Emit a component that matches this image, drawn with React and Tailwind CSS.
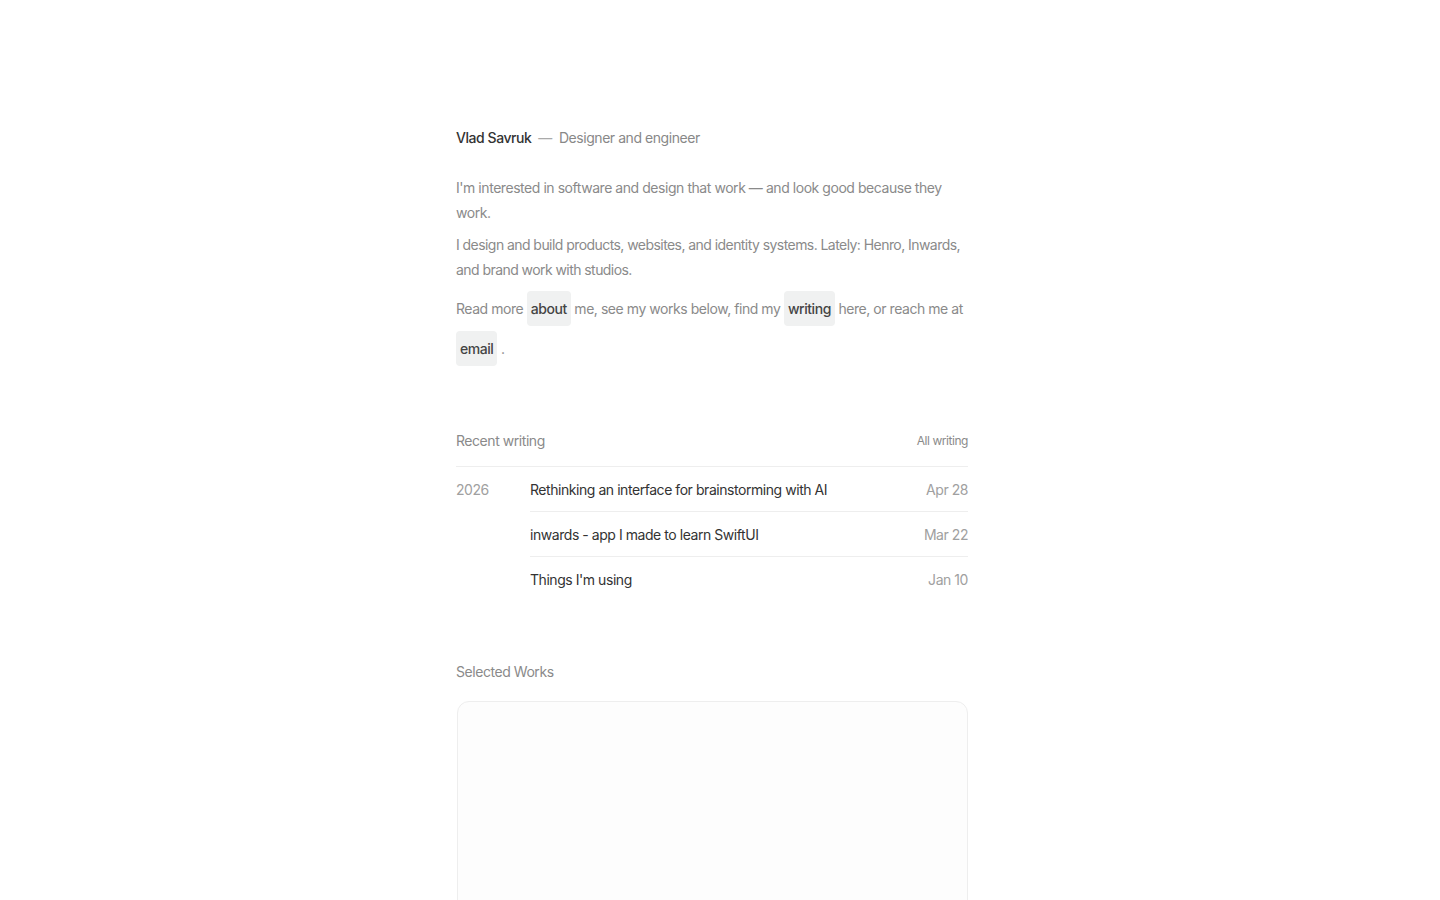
export default function App() {
  const posts = [
    { title: "Rethinking an interface for brainstorming with AI", date: "Apr 28" },
    { title: "inwards - app I made to learn SwiftUI", date: "Mar 22" },
    { title: "Things I'm using", date: "Jan 10" },
  ];

  return (
    <div
      className="min-h-screen bg-white flex justify-center pr-4 text-[14px]"
      style={{ fontFamily: "Inter, 'Noto Sans', sans-serif" }}
    >
      <main className="w-[512px] pt-[128px] tracking-[-0.032em]">
        {/* Intro */}
        <div className="flex items-center leading-[20px]">
          <span className="font-medium text-[#333]">Vlad Savruk</span>
          <span className="mx-[7px] text-[#aaa]">—</span>
          <span className="text-[#888]">Designer and engineer</span>
        </div>

        <div className="mt-[27px] text-[#8a8a8a] leading-[25px]">
          <p>I'm interested in software and design that work — and look good because they work.</p>
          <p className="mt-[7px] tracking-[-0.04em]">
            I design and build products, websites, and identity systems. Lately: Henro, Inwards, and brand work with studios.
          </p>
          <p className="mt-[7px] leading-[40px]">
            Read more{" "}
            <a className="inline-block leading-[35px] px-[4px] rounded-[4px] bg-[#f0f1f1] text-[#444] font-medium">about</a>{" "}
            me, see my works below, find my{" "}
            <a className="inline-block leading-[35px] px-[4px] rounded-[4px] bg-[#f0f1f1] text-[#444] font-medium">writing</a>{" "}
            here, or reach me at{" "}
            <a className="inline-block leading-[35px] px-[4px] rounded-[4px] bg-[#f0f1f1] text-[#444] font-medium">email</a>{" "}
            .
          </p>
        </div>

        {/* Recent writing */}
        <section className="mt-[61px]">
          <div className="flex items-center justify-between pb-[15px] border-b border-[#eeeeee]">
            <h2 className="text-[#8a8a8a]">Recent writing</h2>
            <a className="text-[12px] text-[#8a8a8a]">All writing</a>
          </div>
          <div className="flex">
            <div className="w-[74px] pt-[12px] text-[#a0a0a0]">2026</div>
            <ul className="flex-1">
              {posts.map((p, i) => (
                <li
                  key={p.title}
                  className={
                    "flex justify-between h-[45px] items-center " +
                    (i < posts.length - 1 ? "border-b border-[#eeeeee]" : "")
                  }
                >
                  <span className="text-[#333]">{p.title}</span>
                  <span className="text-[#a0a0a0]">{p.date}</span>
                </li>
              ))}
            </ul>
          </div>
        </section>

        {/* Selected works */}
        <section className="mt-[59px]">
          <h2 className="text-[#8a8a8a]">Selected Works</h2>
          <div className="mt-[19px] ml-px h-[400px] rounded-[12px] border border-[#eeeeee] bg-[#fdfdfd]" />
        </section>
      </main>
    </div>
  );
}
